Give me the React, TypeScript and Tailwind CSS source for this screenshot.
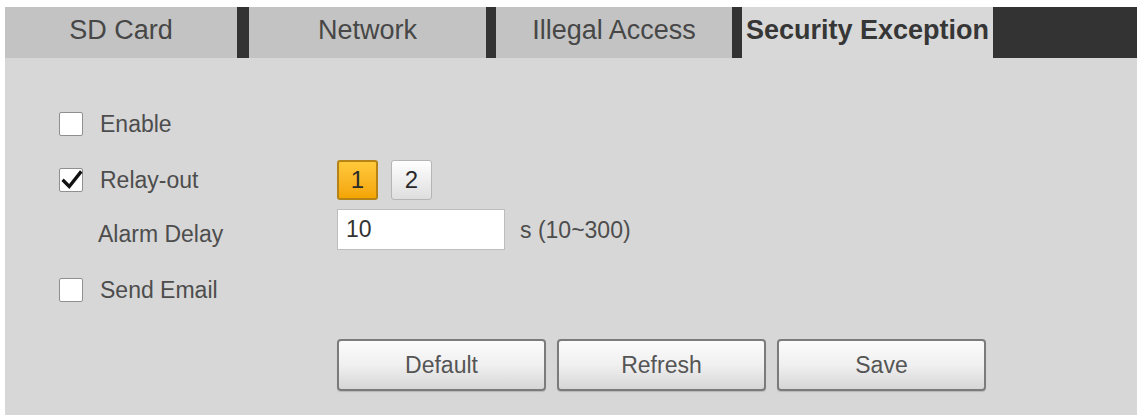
import React, { useState } from 'react';

const font = { fontFamily: '"Liberation Sans", Arial, sans-serif' };

const Checkbox: React.FC<{ checked: boolean; onChange: () => void }> = ({ checked, onChange }) => (
  <button
    type="button"
    onClick={onChange}
    className="relative w-[24px] h-[24px] shrink-0 bg-white border-[1.5px] border-[#8f8f8f] rounded-[2px]"
  >
    {checked && (
      <svg viewBox="0 0 24 24" className="absolute left-[1px] top-[-1px] w-[22px] h-[24px]">
        <path d="M3 13 L9 19 L21 4" fill="none" stroke="#111" strokeWidth="3.6" strokeLinecap="square" />
      </svg>
    )}
  </button>
);

const TabSep: React.FC<{ w: string }> = ({ w }) => <div className={`${w} h-full bg-[#333333]`} />;

const ActionButton: React.FC<{ label: string }> = ({ label }) => (
  <button
    type="button"
    className="w-[209px] h-[52px] rounded-[4px] border-2 border-[#7b7b7b] bg-gradient-to-b from-[#fbfbfb] via-[#f0f0f0] to-[#d6d6d6] text-[23px] text-[#555555] shadow-[0_1px_1px_rgba(0,0,0,0.15)]"
  >
    {label}
  </button>
);

export default function App() {
  const [enable, setEnable] = useState(false);
  const [relay, setRelay] = useState(true);
  const [email, setEmail] = useState(false);
  const [channel, setChannel] = useState(1);
  const [delay, setDelay] = useState('10');

  return (
    <div className="w-[1137px] h-[417px] bg-white pl-[5px] pt-[7px] pb-[2px] flex flex-col" style={font}>
      {/* tab bar */}
      <div className="flex h-[51px] shrink-0">
        <div className="w-[232px] h-full bg-[#c3c3c3] flex items-center justify-center pb-[4px] text-[27px] text-[#474747]">
          SD Card
        </div>
        <TabSep w="w-[12px]" />
        <div className="w-[237px] h-full bg-[#c3c3c3] flex items-center justify-center pb-[4px] text-[27px] text-[#474747]">
          Network
        </div>
        <TabSep w="w-[10px]" />
        <div className="w-[236px] h-full bg-[#c3c3c3] flex items-center justify-center pb-[4px] text-[27px] text-[#474747]">
          Illegal Access
        </div>
        <TabSep w="w-[10px]" />
        <div className="w-[251px] h-full bg-[#d8d8d8] flex items-center justify-center pb-[4px] text-[27px] font-bold text-[#363636] whitespace-nowrap">
          Security Exception
        </div>
        <div className="flex-1 h-full bg-[#333333]" />
      </div>

      {/* content */}
      <div className="flex-1 bg-[#d7d7d7] pl-[54px] pt-[46px] flex flex-col text-[23px] text-[#4d4d4d]">
        <div className="h-[40px] flex items-center">
          <Checkbox checked={enable} onChange={() => setEnable(!enable)} />
          <span className="ml-[17px]">Enable</span>
        </div>

        <div className="h-[40px] mt-[16px] flex items-center">
          <div className="w-[278px] flex items-center">
            <Checkbox checked={relay} onChange={() => setRelay(!relay)} />
            <span className="ml-[17px]">Relay-out</span>
          </div>
          <div className="flex gap-[13px]">
            {[1, 2].map((n) => (
              <button
                key={n}
                type="button"
                onClick={() => setChannel(n)}
                className={
                  n === channel
                    ? 'w-[41px] h-[40px] rounded-[3px] border-2 border-[#b58316] bg-gradient-to-b from-[#ffc93a] to-[#f4a500] text-[24px] text-[#2a2a2a]'
                    : 'w-[41px] h-[40px] rounded-[3px] border border-[#b5b5b5] bg-gradient-to-b from-[#ffffff] to-[#dedede] text-[24px] text-[#2a2a2a]'
                }
              >
                {n}
              </button>
            ))}
          </div>
        </div>

        <div className="h-[41px] mt-[9px] flex items-center">
          <span className="w-[278px] pl-[39px] pt-[10px]">Alarm Delay</span>
          <input
            value={delay}
            onChange={(e) => setDelay(e.target.value)}
            className="w-[168px] h-[41px] bg-white border border-[#bdbdbd] px-[8px] text-[23px] text-[#333333] outline-none"
          />
          <span className="ml-[15px] pt-[2px]">s (10~300)</span>
        </div>

        <div className="h-[40px] mt-[20px] flex items-center">
          <Checkbox checked={email} onChange={() => setEmail(!email)} />
          <span className="ml-[17px]">Send Email</span>
        </div>

        <div className="mt-[29px] pl-[278px] flex gap-[11px]">
          <ActionButton label="Default" />
          <ActionButton label="Refresh" />
          <ActionButton label="Save" />
        </div>
      </div>
    </div>
  );
}
